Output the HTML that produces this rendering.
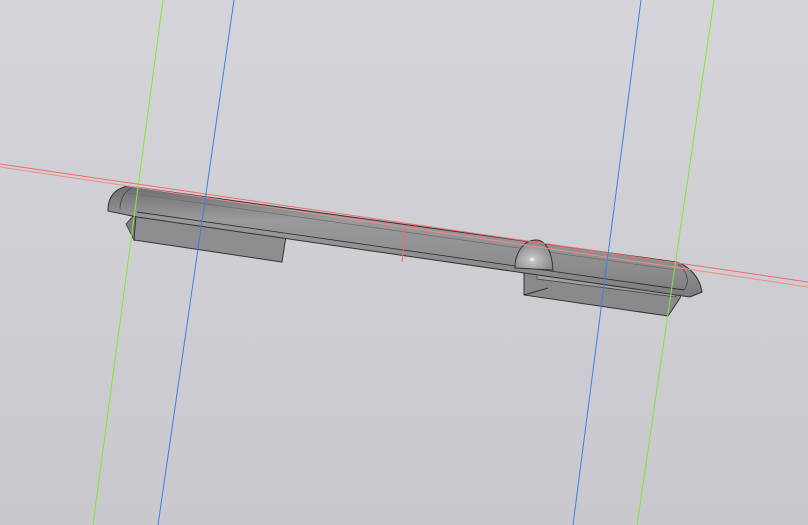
<!DOCTYPE html>
<html><head><meta charset="utf-8"><style>
html,body{margin:0;padding:0;width:808px;height:525px;overflow:hidden;background:linear-gradient(#d5d5d9,#c9c9cd);}
</style></head><body>
<svg width="808" height="525" viewBox="0 0 808 525" xmlns="http://www.w3.org/2000/svg">
<defs>
<linearGradient id="bar" x1="0" y1="0" x2="0" y2="1">
<stop offset="0" stop-color="#6e6e70"/><stop offset="0.3" stop-color="#9a9a9c"/><stop offset="0.8" stop-color="#8a8a8c"/><stop offset="1" stop-color="#7a7a7c"/>
</linearGradient>
<radialGradient id="dome" cx="0.45" cy="0.65" r="0.6">
<stop offset="0" stop-color="#ffffff"/><stop offset="0.15" stop-color="#c0c0c2"/><stop offset="1" stop-color="#858587"/>
</radialGradient>
</defs>
<!-- left box -->
<polygon points="136,214 286,236 282,262 134,240" fill="#8e8e90" stroke="#333" stroke-width="1"/>
<polygon points="126,224 136,213 134,240" fill="#7e7e80" stroke="#333" stroke-width="0.8"/>
<!-- right box -->
<polygon points="524,266 684,288 680,298 668,316 524,295" fill="#8a8a8c" stroke="#333" stroke-width="1"/>
<polygon points="537,272 676,291 676,297 537,279" fill="#a0a0a2" stroke="#444" stroke-width="0.8"/>
<line x1="524" y1="295" x2="548" y2="288" stroke="#333"/>
<!-- bar -->
<path d="M108,210 C108,196 116,188 128,186 L676,262 C690,266 700,278 702,292 L690,297 L137,217 L108,211 Z" fill="url(#bar)" stroke="#333" stroke-width="1"/>
<line x1="128" y1="193" x2="676" y2="270" stroke="#666" stroke-width="0.6"/>
<line x1="137" y1="212" x2="684" y2="290" stroke="#333" stroke-width="0.9"/>
<path d="M120,209 C120,198 125,191 132,188" fill="none" stroke="#444" stroke-width="0.8"/>
<path d="M684,290 C690,282 688,272 678,264" fill="none" stroke="#444" stroke-width="0.8"/>
<!-- dome -->
<path d="M515,268 C515,251 525,240 536,240 C546,240 552,252 553,270 Z" fill="url(#dome)" stroke="#333" stroke-width="1"/>
<!-- construction lines -->
<line x1="0" y1="164" x2="808" y2="282" stroke="#f26a6a" stroke-width="1"/>
<line x1="0" y1="167" x2="808" y2="287" stroke="#f48a8a" stroke-width="1"/>
<line x1="406" y1="225" x2="402" y2="262" stroke="#f26a6a" stroke-width="1"/>
<line x1="163" y1="0" x2="93" y2="525" stroke="#7de83a" stroke-width="1"/>
<line x1="714" y1="0" x2="637" y2="525" stroke="#7de83a" stroke-width="1"/>
<line x1="234" y1="0" x2="158" y2="525" stroke="#3a80f0" stroke-width="1"/>
<line x1="641" y1="0" x2="573" y2="525" stroke="#3a80f0" stroke-width="1"/>
</svg>
</body></html>
